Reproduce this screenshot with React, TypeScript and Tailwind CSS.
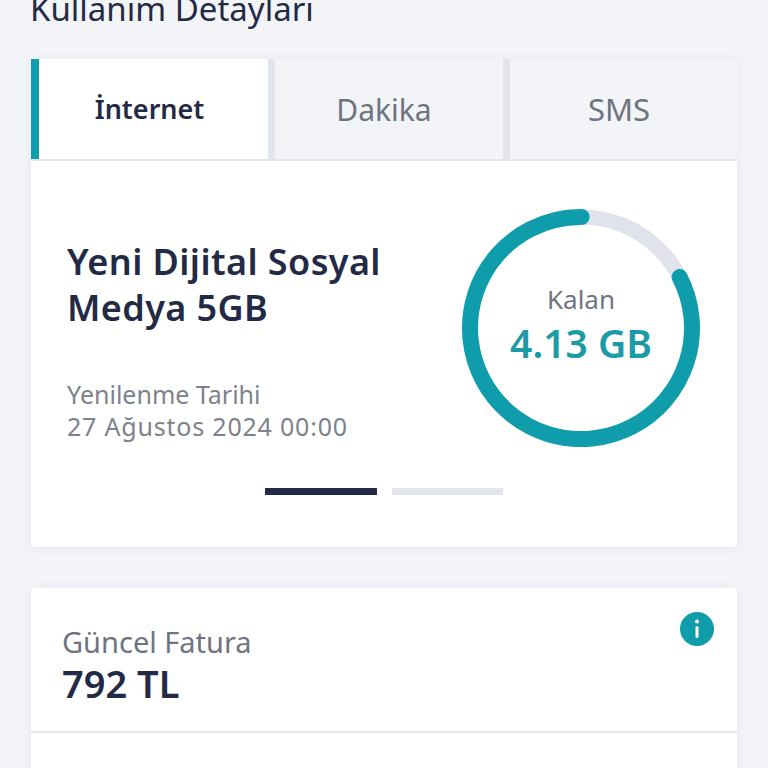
const FONT = "font-['Noto_Sans','Liberation_Sans',sans-serif]";

function UsageRing() {
  const r = 111;
  const c = 2 * Math.PI * r;
  const used = 4.13 / 5;
  return (
    <div className="relative h-[240px] w-[240px]">
      <svg width="240" height="240" viewBox="0 0 240 240" className="absolute inset-0">
        <circle cx="120" cy="120" r={r} fill="none" stroke="#e0e3ec" strokeWidth="15" />
        <circle
          cx="120"
          cy="120"
          r={r}
          fill="none"
          stroke="#0f9cab"
          strokeWidth="16"
          strokeLinecap="round"
          strokeDasharray={`${c * used} ${c}`}
          transform={`rotate(${-90 - used * 360} 120 120)`}
        />
      </svg>
      <div className="absolute inset-0 flex flex-col items-center justify-center pb-[6px]">
        <div className="text-[26px] leading-[30px] text-[#6f7480] mt-[-1px]">Kalan</div>
        <div className="mt-[6px] text-[39px] leading-[46px] font-semibold text-[#1b9aa8]">4.13 GB</div>
      </div>
    </div>
  );
}

export default function App() {
  return (
    <div className={`h-[768px] w-[768px] overflow-hidden bg-[#f2f4f8] px-[31px] ${FONT}`}>
      <h1 className="mt-[-11px] ml-[-1px] h-[70px] text-[33px] leading-[40px] font-normal text-[#232a45]">
        Kullanım Detayları
      </h1>

      <div className="rounded-[3px] bg-white shadow-[0_1px_10px_rgba(40,50,80,0.07)]">
        {/* Tabs */}
        <div className="flex h-[102px] gap-[7px] border-b-2 border-[#e4e6ec] bg-[#e2e5ec]">
          <div className="flex w-[237px] items-center justify-center border-l-[8px] border-[#0f9cab] bg-white pr-[8px] text-[27px] font-semibold text-[#232a45]">
            İnternet
          </div>
          <div className="flex w-[228px] items-center justify-center bg-[#f3f4f8] pr-[10px] text-[30px] text-[#6f7480]">
            Dakika
          </div>
          <div className="flex flex-1 items-center justify-center bg-[#f3f4f8] pr-[9px] text-[31px] text-[#6f7480]">
            SMS
          </div>
        </div>

        {/* Package */}
        <div className="h-[386px] px-[36px] pt-[47px]">
          <div className="flex items-start justify-between">
            <div className="pt-[31px]">
              <div className="text-[36px] leading-[46px] font-semibold tracking-[0.4px] text-[#232a45]">
                Yeni Dijital Sosyal
                <br />
                Medya 5GB
              </div>
              <div className="mt-[47px] text-[25px] leading-[32px] text-[#7d828d]">
                Yenilenme Tarihi
                <div className="tracking-[0.8px]">27 Ağustos 2024 00:00</div>
              </div>
            </div>
            <UsageRing />
          </div>
          <div className="mt-[40px] flex justify-center gap-[15px] pr-[1px]">
            <div className="h-[7px] w-[112px] bg-[#232a45]" />
            <div className="h-[7px] w-[111px] bg-[#e2e5ec]" />
          </div>
        </div>
      </div>

      {/* Invoice */}
      <div className="mt-[41px] rounded-[3px] bg-white shadow-[0_1px_10px_rgba(40,50,80,0.07)]">
        <div className="flex h-[145px] justify-between border-b-2 border-[#e7e9ee] pl-[31px] pr-[23px] pt-[36px]">
          <div>
            <div className="text-[29px] leading-[36px] text-[#6f7480]">Güncel Fatura</div>
            <div className="mt-[1px] text-[38px] leading-[44px] font-semibold text-[#232a45]">792 TL</div>
          </div>
          <svg width="34" height="34" viewBox="0 0 34 34" className="mt-[-12px]">
            <circle cx="17" cy="17" r="17" fill="#0f9cab" />
            <circle cx="17" cy="9.5" r="2" fill="#fff" />
            <rect x="15.5" y="14" width="3" height="12" rx="1.5" fill="#fff" />
          </svg>
        </div>
        <div className="h-[60px]" />
      </div>
    </div>
  );
}
